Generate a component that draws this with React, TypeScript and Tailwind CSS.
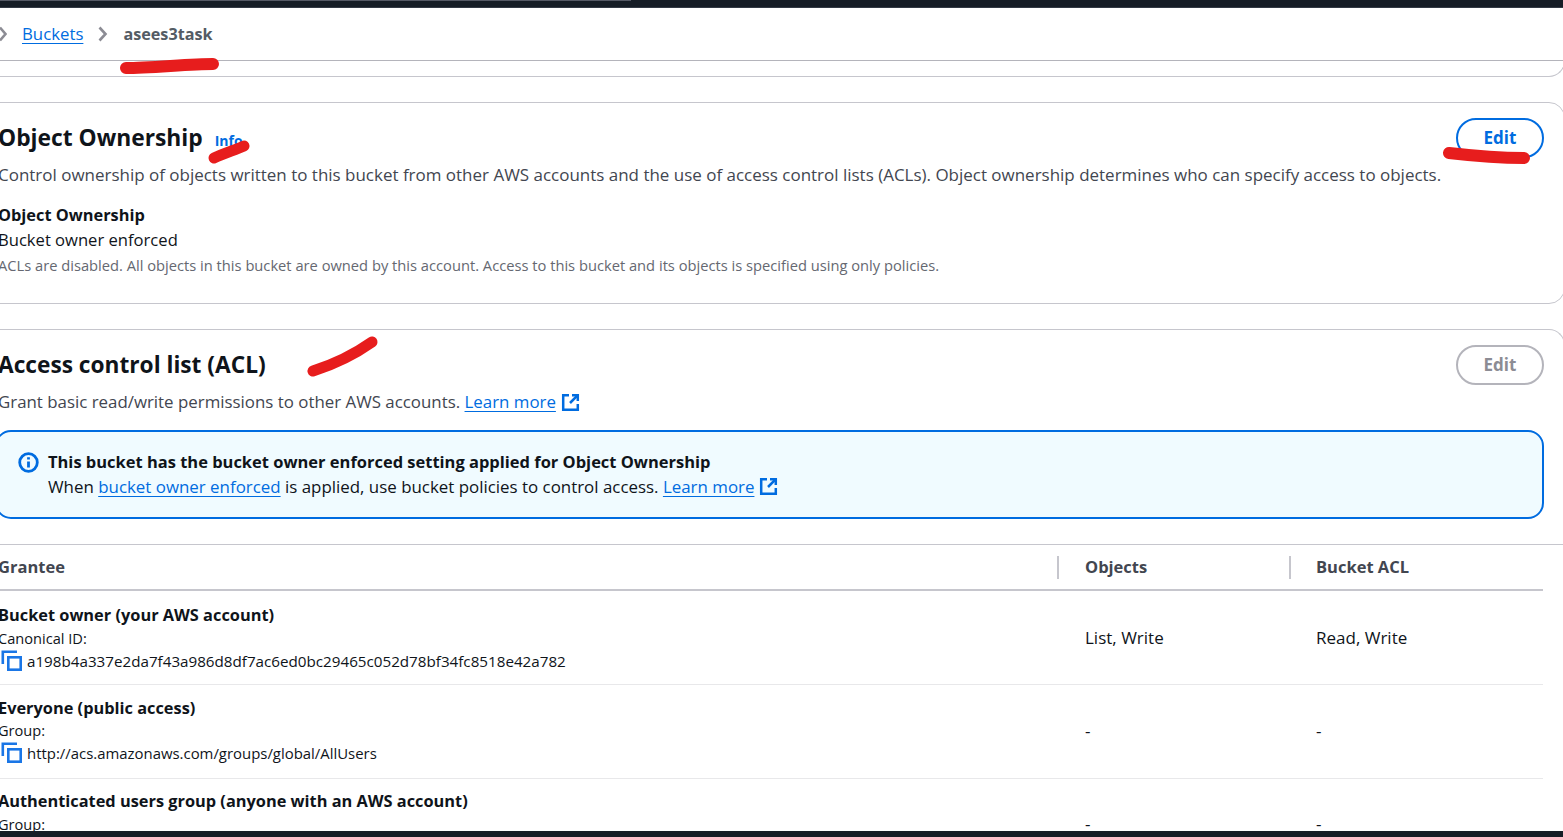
import React from "react";

function ExternalIcon() {
  return (
    <svg width="19" height="19" viewBox="0 0 19 19" fill="none" stroke="#006ce0" strokeWidth="2.5" className="shrink-0">
      <path d="M8 2.2H2.2v14.6h14.6V11" />
      <path d="M11 2.2h5.8V8" />
      <path d="M16.8 2.2L9 10" />
    </svg>
  );
}

function CopyIcon() {
  return (
    <svg width="21" height="21" viewBox="0 0 21 21" fill="none" stroke="#1a76e6" strokeWidth="2.6" className="shrink-0">
      <path d="M1.8 14V1.8H16" />
      <rect x="7.3" y="7.3" width="12.4" height="12.4" />
    </svg>
  );
}

type RowProps = {
  name: string;
  label: string;
  value?: string;
  objects: string;
  acl: string;
  rowClass: string;
  nameClass: string;
  labelClass: string;
  valueClass?: string;
  cellClass: string;
};

function Row({ name, label, value, objects, acl, rowClass, nameClass, labelClass, valueClass, cellClass }: RowProps) {
  return (
    <div className={`flex w-[1545px] ${rowClass}`}>
      <div className={`w-[1087px] shrink-0 ${nameClass}`}>
        <div className="text-[16.35px] leading-[22px] font-bold text-[#0f141a]">{name}</div>
        <div className={`text-[14.6px] leading-[20px] text-[#0f141a] ${labelClass}`}>{label}</div>
        {value && (
          <div className={`flex items-center leading-[20px] text-[#0f141a] mt-[2px] ${valueClass}`}>
            <span className="ml-[3px] mr-[5px]"><CopyIcon /></span>
            {value}
          </div>
        )}
      </div>
      <div className={`w-[231px] shrink-0 text-[17px] leading-[22px] text-[#0f141a] ${cellClass}`}>{objects}</div>
      <div className={`text-[17px] leading-[22px] text-[#0f141a] ${cellClass}`}>{acl}</div>
    </div>
  );
}

export default function App() {
  return (
    <div className="relative flex flex-col w-[1563px] h-[837px] overflow-hidden bg-white" style={{ fontFamily: '"Open Sans", "Noto Sans", sans-serif' }}>
      <div className="h-[8px] shrink-0 bg-[#161d26] border-b border-[#333a45]">
        <div className="h-[1px] w-[631px] bg-[#565a66]" />
      </div>

      <nav className="h-[53px] shrink-0 flex items-center border-b border-[#b4b4bb]">
        <svg width="8" height="16" viewBox="0 0 8 16" fill="none" stroke="#8c8c94" strokeWidth="2.6" className="-ml-[1px]"><path d="M1 1.5l5.5 6.5-5.5 6.5" /></svg>
        <a className="ml-[15px] text-[16.8px] text-[#006ce0] underline underline-offset-[3px]">Buckets</a>
        <svg width="10" height="16" viewBox="0 0 10 16" fill="none" stroke="#8c8c94" strokeWidth="2.6" className="ml-[15px]"><path d="M1.5 1.5l6 6.5-6 6.5" /></svg>
        <span className="ml-[15px] mt-[1px] text-[16.2px] font-bold text-[#545b64]">asees3task</span>
      </nav>

      <div className="h-[16px] shrink-0 -ml-[21px] -mr-[2px] border-b border-r border-[#c6c6cd] rounded-br-[16px]" />

      <section className="mt-[25px] h-[202px] shrink-0 -ml-[21px] -mr-[2px] pl-[18px] pr-[20px] border border-[#c6c6cd] rounded-[16px]">
        <div className="flex items-start justify-between pt-[18px]">
          <div className="flex items-baseline">
            <h2 className="text-[22.8px] leading-[34px] font-bold text-[#0f141a]">Object Ownership</h2>
            <a className="ml-[12px] text-[14px] font-bold text-[#006ce0]">Info</a>
          </div>
          <button className="-mt-[3px] w-[88px] h-[40px] rounded-[20px] border-2 border-[#006ce0] text-[17px] font-bold text-[#006ce0]">Edit</button>
        </div>
        <p className="mt-[6px] text-[16.98px] leading-[22px] whitespace-nowrap text-[#424650]">Control ownership of objects written to this bucket from other AWS accounts and the use of access control lists (ACLs). Object ownership determines who can specify access to objects.</p>
        <div className="mt-[18px] text-[16.35px] leading-[22px] font-bold text-[#0f141a]">Object Ownership</div>
        <div className="mt-[3px] text-[16.6px] leading-[22px] text-[#0f141a]">Bucket owner enforced</div>
        <div className="mt-[4px] text-[14.7px] leading-[20px] text-[#656871]">ACLs are disabled. All objects in this bucket are owned by this account. Access to this bucket and its objects is specified using only policies.</div>
      </section>

      <section className="mt-[25px] flex-1 min-h-0 -ml-[21px] -mr-[2px] border-t border-r border-[#c6c6cd] rounded-tr-[16px] overflow-hidden">
        <div className="pl-[19px] pr-[20px]">
          <div className="flex items-start justify-between pt-[15px]">
            <h2 className="mt-[1px] text-[22.7px] leading-[38px] font-bold text-[#0f141a]">Access control list (ACL)</h2>
            <button className="w-[88px] h-[40px] rounded-[20px] border-2 border-[#b4b4bb] text-[17px] font-bold text-[#8c8c94]">Edit</button>
          </div>
          <p className="flex items-center h-[22px] mt-[6px] text-[16.87px] text-[#424650]">
            Grant basic read/write permissions to other AWS accounts.&nbsp;
            <a className="text-[#006ce0] underline underline-offset-[3px]">Learn more</a>
            <span className="ml-[5px]"><ExternalIcon /></span>
          </p>
          <div className="mt-[17px] -ml-[3px] h-[89px] rounded-[16px] border-2 border-[#006ce0] bg-[#f0fbff] flex pt-[17px] pl-[22px]">
            <svg width="21" height="21" viewBox="0 0 21 21" fill="none" stroke="#006ce0" strokeWidth="2.8" className="shrink-0 mt-[3px] -ml-[1px]">
              <circle cx="10.5" cy="10.5" r="8.8" />
              <path d="M10.5 9.5v6M10.5 5.2v2.4" />
            </svg>
            <div className="ml-[9px] text-[16.48px] leading-[25px] text-[#0f141a]">
              <div className="font-bold">This bucket has the bucket owner enforced setting applied for Object Ownership</div>
              <div className="flex items-center text-[16.9px]">
                When&nbsp;<a className="text-[#006ce0] underline underline-offset-[3px]">bucket owner enforced</a>&nbsp;is applied, use bucket policies to control access.&nbsp;
                <a className="text-[#006ce0] underline underline-offset-[3px]">Learn more</a>
                <span className="ml-[5px]"><ExternalIcon /></span>
              </div>
            </div>
          </div>
        </div>

        <div className="mt-[25px] border-t border-[#c6c6cd] pl-[19px]">
          <div className="flex items-center h-[46px] w-[1545px] border-b-2 border-[#c6c6cd] text-[16.5px] font-bold text-[#424650]">
            <div className="w-[1059px] shrink-0">Grantee</div>
            <div className="w-[232px] shrink-0 pl-[26px] h-[23px] flex items-center border-l-2 border-[#c6c6cd]">Objects</div>
            <div className="pl-[25px] h-[23px] flex items-center border-l-2 border-[#c6c6cd]">Bucket ACL</div>
          </div>
          <Row name="Bucket owner (your AWS account)" label="Canonical ID:" value="a198b4a337e2da7f43a986d8df7ac6ed0bc29465c052d78bf34fc8518e42a782" objects="List, Write" acl="Read, Write" rowClass="h-[94px] border-b border-[#e8e8ea]" nameClass="pt-[13px]" labelClass="mt-[2px]" valueClass="text-[15.2px]" cellClass="pt-[36px]" />
          <Row name="Everyone (public access)" label="Group:" value="http://acs.amazonaws.com/groups/global/AllUsers" objects="-" acl="-" rowClass="h-[94px] border-b border-[#e8e8ea]" nameClass="pt-[12px]" labelClass="mt-[1px]" valueClass="text-[14.92px]" cellClass="pt-[35px]" />
          <Row name="Authenticated users group (anyone with an AWS account)" label="Group:" objects="-" acl="-" rowClass="" nameClass="pt-[11px]" labelClass="mt-[2px]" cellClass="pt-[34px]" />
        </div>
      </section>

      <div className="h-[6px] bg-[#161d26] shrink-0" />

      <svg width="1563" height="837" viewBox="0 0 1563 837" fill="none" stroke="#e71d1d" strokeLinecap="round" className="absolute left-0 top-0 pointer-events-none">
        <path d="M126 68C150 68 190 64 213 64" strokeWidth="12" />
        <path d="M214 158C225 153 235 150 244 146" strokeWidth="11" />
        <path d="M1449 153C1475 156 1500 158 1524 158" strokeWidth="12" />
        <path d="M313 371C335 364 355 354 372 342" strokeWidth="11" />
      </svg>
    </div>
  );
}
